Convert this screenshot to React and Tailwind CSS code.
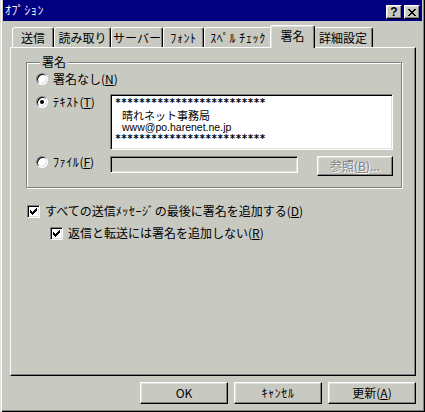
const FACE = 'bg-[#c8cac2]';
const RAISED =
  'border border-t-white border-l-white border-r-black border-b-black shadow-[inset_-1px_-1px_0_#808080,inset_1px_1px_0_#dfdfdf]';
const SUNKEN =
  'border border-t-[#808080] border-l-[#808080] border-r-white border-b-white shadow-[inset_1px_1px_0_#000,inset_-1px_-1px_0_#dfdfdf]';

const TABS = [
  { label: '送信', w: 'w-[42px]' },
  { label: '読み取り', w: 'w-[57px]' },
  { label: 'サーバー', w: 'w-[52px]' },
  { label: 'ﾌｫﾝﾄ', w: 'w-[41px]', half: true },
  { label: 'ｽﾍﾟﾙ ﾁｪｯｸ', w: 'w-[68px]', half: true },
  { label: '署名', w: 'w-[45px]', active: true },
  { label: '詳細設定', w: 'w-[60px]' },
];

// half-width kana in Noto render a little narrow; open them up a touch
const HALF = 'tracking-[0.6px]';

function Key({ k }) {
  return (
    <>
      (<span className="underline underline-offset-[1px]">{k}</span>)
    </>
  );
}

function Radio({ checked }) {
  return (
    <span className="flex h-[12px] w-[12px] shrink-0 items-center justify-center rounded-full border border-t-[#808080] border-l-[#808080] border-r-white border-b-white bg-white shadow-[inset_1px_1px_0_#000,inset_-1px_-1px_0_#dfdfdf]">
      {checked && <span className="h-[4px] w-[4px] rounded-full bg-black" />}
    </span>
  );
}

function Check() {
  return (
    <span className={`flex h-[13px] w-[13px] shrink-0 items-center justify-center bg-white ${SUNKEN}`}>
      <svg width="7" height="7" viewBox="0 0 7 7" shapeRendering="crispEdges">
        <path
          fill="#000"
          d="M0 2h1v3H0zM1 3h1v3H1zM2 4h1v3H2zM3 3h1v3H3zM4 2h1v3H4zM5 1h1v3H5zM6 0h1v3H6z"
        />
      </svg>
    </span>
  );
}

function Tab({ label, w, active, half }) {
  if (active) {
    return (
      <div
        className={`relative z-10 -mx-[2px] -mb-px flex h-[23px] ${w} items-center justify-center rounded-t-[3px] border-l border-t border-r border-l-white border-t-white border-r-black pb-[3px] ${FACE} shadow-[inset_-1px_0_0_#808080,inset_1px_1px_0_#dfdfdf]`}
      >
        {label}
      </div>
    );
  }
  return (
    <div
      className={`flex h-[20px] ${w} items-center justify-center rounded-t-[3px] border-l border-t border-r border-l-white border-t-white border-r-black pt-[1px] shadow-[inset_-1px_0_0_#808080] ${half ? HALF : ''}`}
    >
      {label}
    </div>
  );
}

function Button({ children, className = '' }) {
  return (
    <div className={`flex h-[22px] w-[88px] items-center justify-center ${RAISED} ${className}`}>
      {children}
    </div>
  );
}

export default function App() {
  return (
    <div
      className={`flex h-[412px] w-[425px] flex-col overflow-hidden px-[3px] ${FACE} font-['Noto_Sans_CJK_JP',sans-serif] text-[12px] leading-[12px] text-black shadow-[inset_1px_0_0_#dfdfdf,inset_2px_0_0_#fff,inset_-1px_-1px_0_#000,inset_-2px_-2px_0_#808080]`}
    >
      {/* title bar */}
      <div className="flex h-[21px] shrink-0 items-center bg-[#000080] pl-[2px] pr-[2px] text-white">
        <span className={`pb-[1px] ${HALF}`}>ｵﾌﾟｼｮﾝ</span>
        <div className="ml-auto flex gap-[2px] pt-[3px]">
          <div className={`flex h-[14px] w-[16px] items-center justify-center font-['Liberation_Sans',sans-serif] text-[12px] font-bold text-black ${FACE} ${RAISED}`}>
            ?
          </div>
          <div className={`flex h-[14px] w-[16px] items-center justify-center ${FACE} ${RAISED}`}>
            <svg width="8" height="7" viewBox="0 0 8 7" shapeRendering="crispEdges">
              <path
                fill="#000"
                d="M0 0h2v1H0zM6 0h2v1H6zM1 1h2v1H1zM5 1h2v1H5zM2 2h4v1H2zM3 3h2v1H3zM2 4h4v1H2zM1 5h2v1H1zM5 5h2v1H5zM0 6h2v1H0zM6 6h2v1H6z"
              />
            </svg>
          </div>
        </div>
      </div>

      <div className="flex flex-col pl-[7px] pr-[6px]">
        {/* tabs */}
        <div className="mt-[4px] flex h-[22px] items-end pl-[2px]">
          {TABS.map(t => (
            <Tab key={t.label} {...t} />
          ))}
        </div>

        {/* panel */}
        <div className="flex h-[329px] flex-col border border-t-white border-l-white border-r-black border-b-black shadow-[inset_-1px_-1px_0_#808080]">
          <fieldset className="ml-[15px] mt-[8px] w-[376px] border border-[#808080] pb-[11px] pl-[9px] pt-[3px] shadow-[1px_1px_0_#fff,inset_1px_1px_0_#fff]">
            <legend className={`ml-[4px] px-[2px] leading-[12px] ${FACE}`}>署名</legend>

            <div className="flex h-[16px] items-center gap-[5px]">
              <Radio />
              <span>
                署名なし<Key k="N" />
              </span>
            </div>

            <div className="mt-[7px] flex">
              <div className="flex h-[16px] w-[74px] items-center gap-[5px]">
                <Radio checked />
                <span>
                  <span className={HALF}>ﾃｷｽﾄ</span>
                  <Key k="T" />
                </span>
              </div>
              <div className={`h-[56px] w-[283px] bg-white pl-[4px] pt-[2px] ${SUNKEN}`}>
                <div className="font-['DejaVu_Sans_Mono',monospace] text-[10px] font-bold leading-[12px]">*************************</div>
                <div className="pl-[7px] text-[11px] leading-[12px]">晴れネット事務局</div>
                <div className="pl-[7px] font-['Liberation_Sans',sans-serif] text-[10.5px] leading-[12px]">www@po.harenet.ne.jp</div>
                <div className="font-['DejaVu_Sans_Mono',monospace] text-[10px] font-bold leading-[12px]">*************************</div>
              </div>
            </div>

            <div className="mt-[6px] flex items-start">
              <div className="flex h-[12px] w-[74px] items-center gap-[5px]">
                <Radio />
                <span>
                  <span className={HALF}>ﾌｧｲﾙ</span>
                  <Key k="F" />
                </span>
              </div>
              <div className={`h-[17px] w-[188px] ${FACE} ${SUNKEN}`} />
              <div
                className={`ml-[19px] flex h-[20px] w-[76px] items-center justify-center text-[#808080] [text-shadow:1px_1px_0_#fff] ${RAISED}`}
              >
                参照<Key k="B" />...
              </div>
            </div>
          </fieldset>

          <div className="ml-[16px] mt-[15px] flex h-[16px] items-center gap-[5px]">
            <Check />
            <span>
              すべての送信<span className={HALF}>ﾒｯｾｰｼﾞ</span>の最後に署名を追加する<Key k="D" />
            </span>
          </div>
          <div className="ml-[39px] mt-[6px] flex h-[16px] items-center gap-[5px]">
            <Check />
            <span>
              返信と転送には署名を追加しない<Key k="R" />
            </span>
          </div>
        </div>

        {/* buttons */}
        <div className="mt-[6px] flex justify-end gap-[6px]">
          <Button>OK</Button>
          <Button>
            <span className={HALF}>ｷｬﾝｾﾙ</span>
          </Button>
          <Button>
            更新<Key k="A" />
          </Button>
        </div>
      </div>
    </div>
  );
}
